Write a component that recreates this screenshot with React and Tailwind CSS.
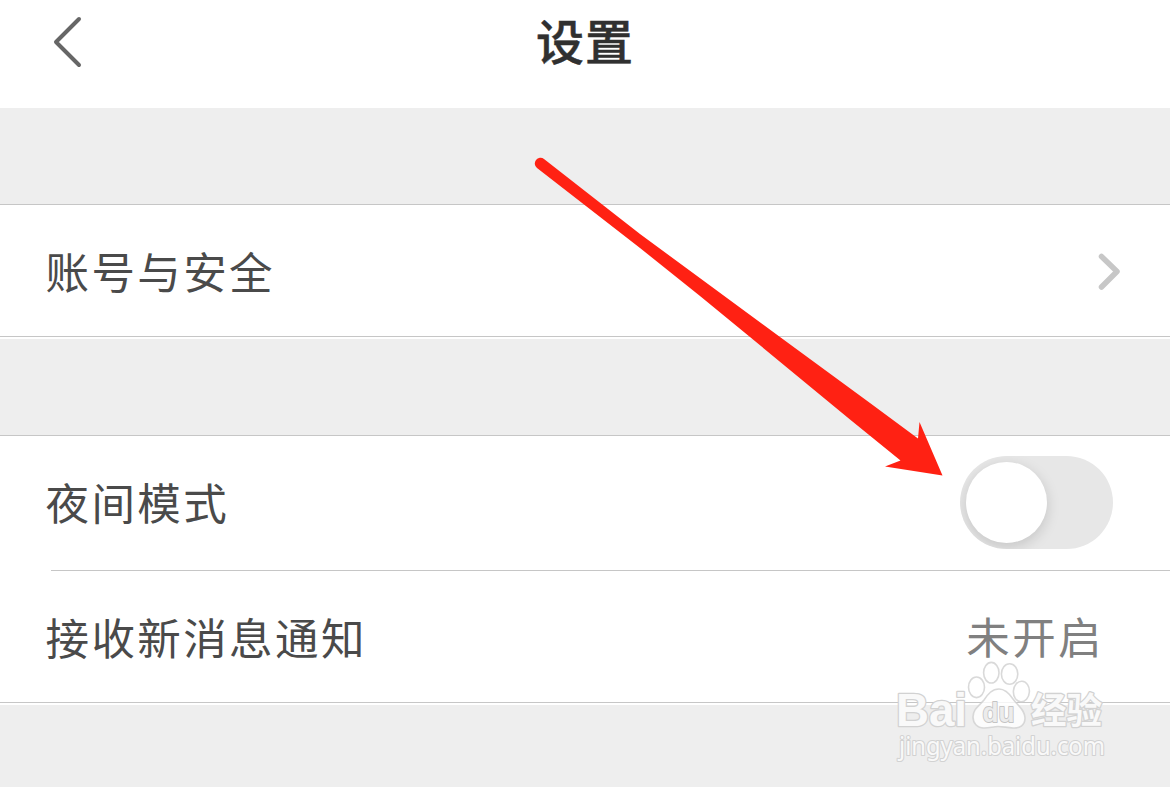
import { useState } from "react";

function Divider({ inset }) {
  return <div className={inset ? "h-px ml-[51px] bg-[#c6c6c6]" : "h-px bg-[#c6c6c6]"} />;
}

function Row({ label, className, children }) {
  return (
    <div className={`flex items-center justify-between pl-[45.5px] ${className}`}>
      <span className="text-[43.5px] leading-[64px] tracking-[2.4px] text-[#4a4a4a]">{label}</span>
      {children}
    </div>
  );
}

function Toggle({ checked, onChange }) {
  return (
    <button
      role="switch"
      aria-checked={checked}
      onClick={() => onChange(!checked)}
      className="flex items-center w-[153px] h-[93px] rounded-full bg-[#e7e7e7] p-1.5 overflow-hidden"
    >
      <span
        className={`size-[81px] rounded-full bg-white shadow-[0_4px_14px_rgba(0,0,0,0.15)] ${
          checked ? "translate-x-[60px]" : ""
        }`}
      />
    </button>
  );
}

function Arrow() {
  return (
    <svg className="absolute left-0 top-0 pointer-events-none" width="1170" height="787" viewBox="0 0 1170 787">
      <path
        d="M544 159 L640 234 L710 285.5 L780 337 L870 403 L918 438.5 L919.5 422 L942.5 475.5 L885 466.5 L900.5 460.5 L850 419.5 L750 337 L700 296 L640 248 L537 168 A5.7 5.7 0 0 1 544 159 Z"
        fill="#ff2113"
      />
    </svg>
  );
}

function Watermark() {
  return (
    <svg
      className="absolute left-[890px] top-[655px] pointer-events-none"
      width="230"
      height="115"
      viewBox="890 655 230 115"
    >
      <g fill="#fff" fillOpacity="0.8" stroke="#cfcfcf" strokeOpacity="0.8" strokeWidth="1.6">
        <ellipse cx="976.5" cy="687.3" rx="8" ry="10.3" />
        <ellipse cx="991.3" cy="672.7" rx="7.7" ry="10.3" />
        <ellipse cx="1009.6" cy="674" rx="8.2" ry="10.3" />
        <ellipse cx="1021.4" cy="691.5" rx="8" ry="10.3" transform="rotate(4 1021.4 691.5)" />
        <path d="M999 689 C1005 689 1009 693 1013 699 C1018 706 1025 710 1025 718 C1025 725 1020 728.5 1013 728 C1006 727.5 1003 726.5 998 726.5 C993 726.5 990 728 984 728 C977 728 973 723 973 717 C973 709 979 706 984 700 C988 694 992 689 999 689 Z" />
      </g>
      <g fill="#f9f9f9" stroke="#d2d2d2" strokeWidth="2.6" strokeLinejoin="round" paintOrder="stroke">
        <text x="896" y="726" fontSize="46" fontWeight="700" textLength="71" lengthAdjust="spacingAndGlyphs" className="font-['Liberation_Sans',sans-serif]">
          Bai
        </text>
        <text x="982.5" y="722" fontSize="28" fontWeight="700" fill="#ececec" stroke="#c4c4c4" strokeWidth="1.8" textLength="32" lengthAdjust="spacingAndGlyphs" className="font-['Liberation_Sans',sans-serif]">
          du
        </text>
        <text x="1031" y="724" fontSize="36" fontWeight="700" textLength="71" lengthAdjust="spacingAndGlyphs" className="font-['Noto_Sans_CJK_SC',sans-serif]">
          经验
        </text>
        <text x="899" y="754.5" fontSize="24.5" strokeWidth="2.2" textLength="206" lengthAdjust="spacingAndGlyphs" className="font-['Noto_Sans',sans-serif]">
          jingyan.baidu.com
        </text>
      </g>
    </svg>
  );
}

export default function App() {
  const [night, setNight] = useState(false);

  return (
    <div className="relative w-[1170px] h-[787px] overflow-hidden bg-[#eeeeee] font-['Noto_Sans_CJK_SC',sans-serif]">
      {/* Header */}
      <header className="grid grid-cols-3 items-start h-[108px] bg-white">
        <button className="pl-[50px] pt-[14px]">
          <svg width="36" height="56" viewBox="0 0 36 56" fill="none" stroke="#666" strokeWidth="4" strokeLinecap="round" strokeLinejoin="round">
            <path d="M29 5 L6 28 L29 51" />
          </svg>
        </button>
        <h1 className="text-center text-[48px] leading-[70px] pt-1 tracking-[1px] font-medium text-[#303030] [-webkit-text-stroke:0.5px_#303030]">
          设置
        </h1>
      </header>

      {/* Account */}
      <section className="mt-24 bg-white pb-0.5">
        <Divider />
        <Row label="账号与安全" className="h-[131px] pr-[48px]">
          <svg className="mt-1" width="26" height="40" viewBox="0 0 26 40" fill="none" stroke="#c7c7c7" strokeWidth="5.5" strokeLinecap="round" strokeLinejoin="round">
            <path d="M5.5 3.5 L21 18.5 L5.5 34" />
          </svg>
        </Row>
        <Divider />
      </section>

      {/* Preferences */}
      <section className="mt-24 bg-white pb-0.5">
        <Divider />
        <Row label="夜间模式" className="h-[134px] pr-[57px] pb-0.5">
          <Toggle checked={night} onChange={setNight} />
        </Row>
        <Divider inset />
        <Row label="接收新消息通知" className="h-[131px] pr-[66px]">
          <span className="text-[43.5px] leading-[64px] tracking-[2.4px] text-[#808080] -mt-0.5">未开启</span>
        </Row>
        <Divider />
      </section>

      <Arrow />
      <Watermark />
    </div>
  );
}
